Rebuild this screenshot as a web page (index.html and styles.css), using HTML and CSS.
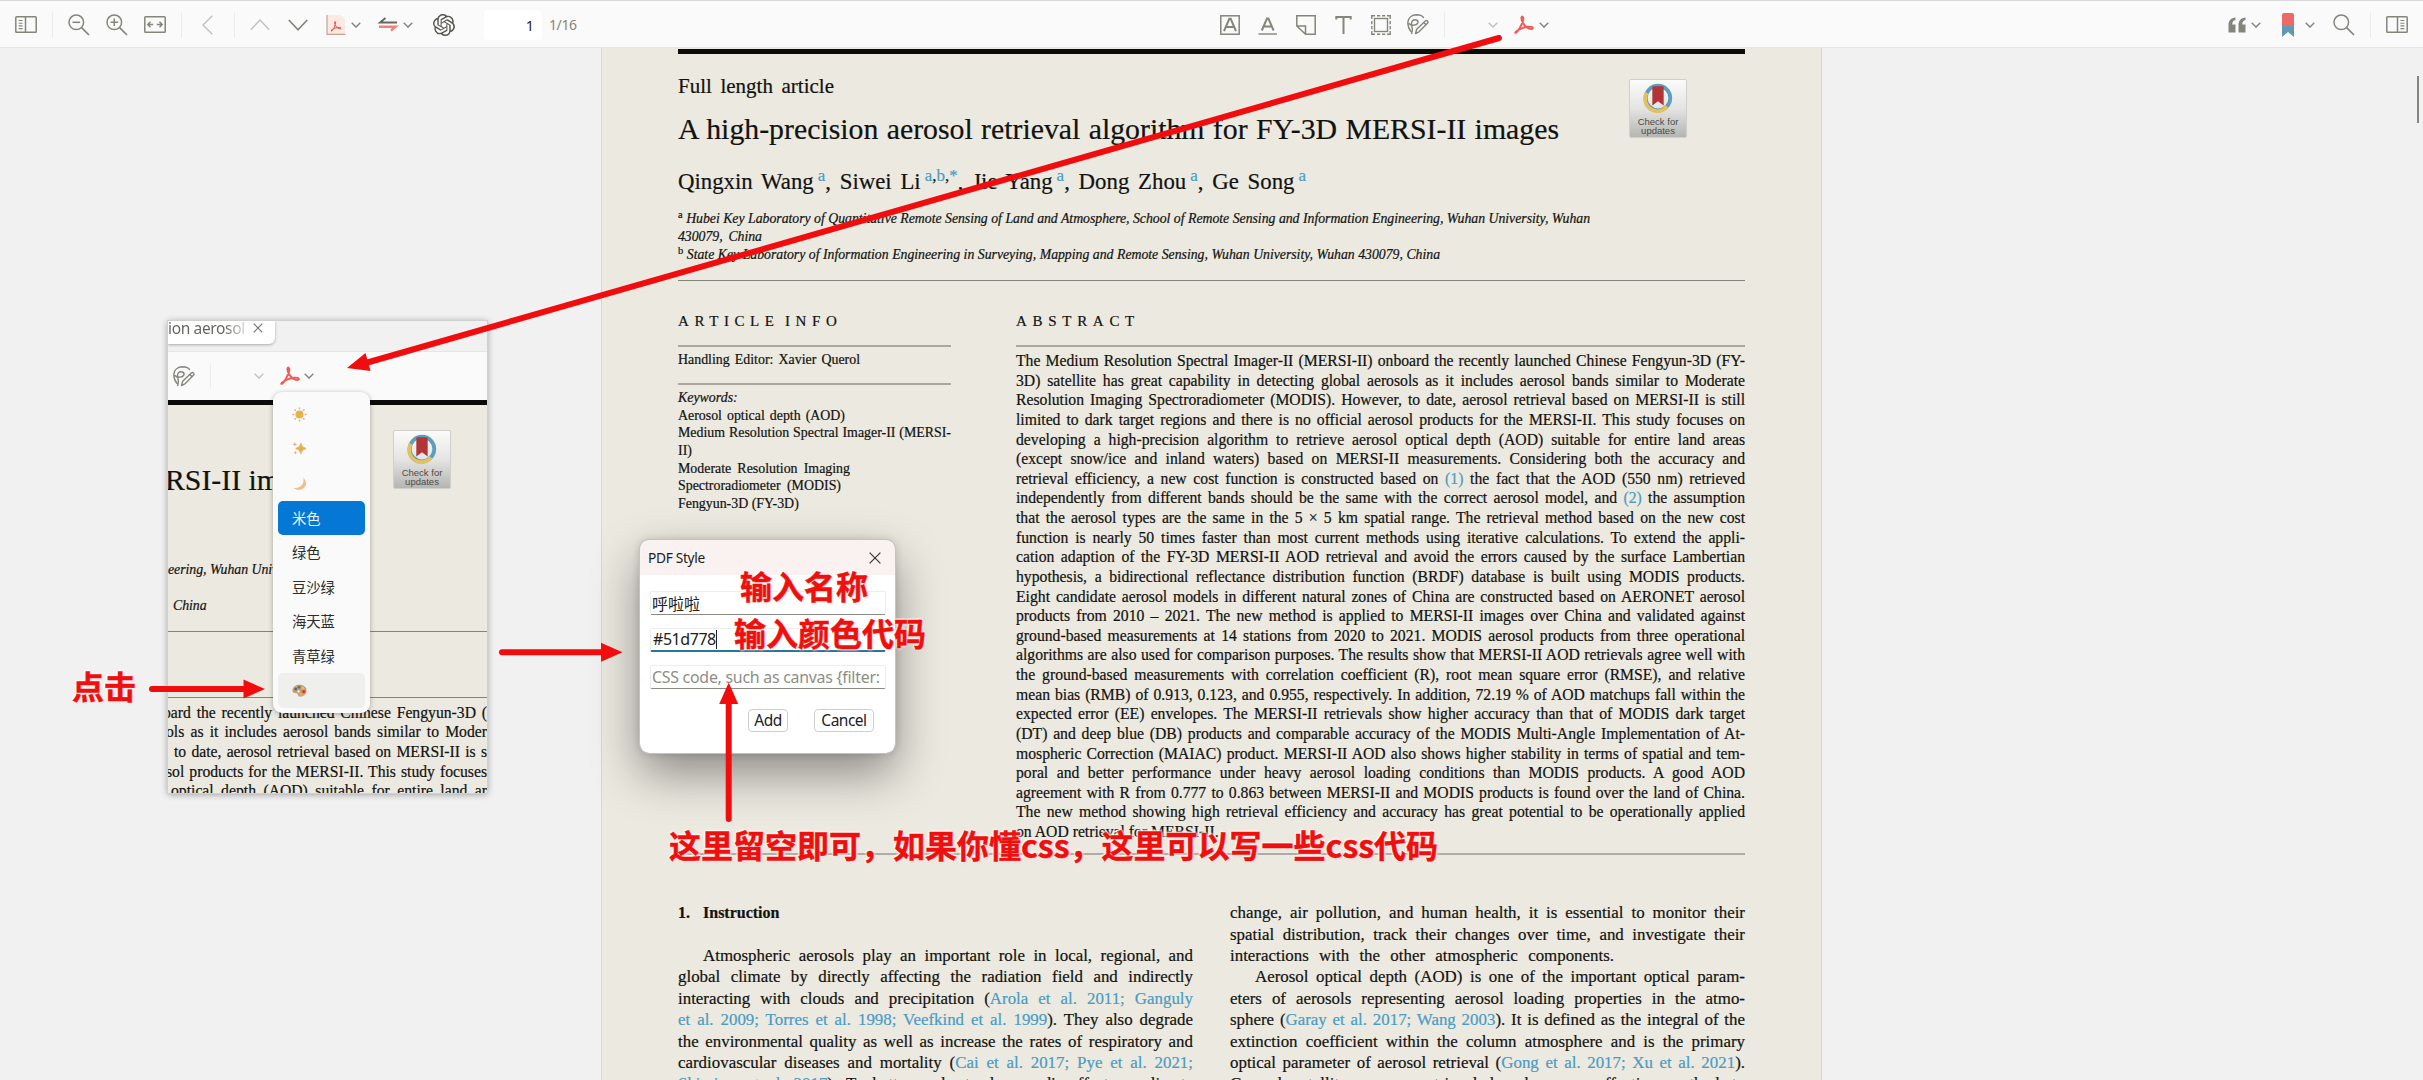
FILE: index.html
```html
<!DOCTYPE html>
<html lang="zh-CN">
<head>
<meta charset="utf-8">
<title>PDF Style</title>
<link rel="stylesheet" href="styles.css">
</head>
<body>
<svg class="defs" width="0" height="0">
  <symbol id="chev" viewBox="0 0 10 6"><path d="M.7.8 5 5.1 9.3.8" fill="none" stroke="currentColor" stroke-width="1.4"/></symbol>
  <symbol id="acrobat" viewBox="0 0 20 20"><path d="M1.6 18.3C4 16.500 8.200 9.500 9.200 5 9.900 1.300 7.600.6 7.400 3 7.200 6.500 11.200 12.300 15 13.700c2.500.9 4.400.1 3.700-1.200-1-1.500-7-.9-11 .8C4.300 14.800.2 17.300 1.600 18.300" fill="none" stroke="currentColor" stroke-width="1.9" stroke-linejoin="round"/></symbol>
  <symbol id="scribble" viewBox="0 0 22 21"><g fill="none" stroke="currentColor" stroke-width="1.4" stroke-linecap="round" stroke-linejoin="round"><path d="M4 17.500C1.500 14.500.7 11 .9 8 1.300 3.500 5 .9 9.500.8c3 0 5.500.8 7 2.700"/><path d="M2 9.500C4 12.300 10 11.500 11 8.500c.5-2.500-3.500-3.700-5.500-1.700S5 12.500 5.300 14.500c.2 2-.2 4-.6 5"/><path d="M8.500 19.500l1.200-4.200L18.300 7a1.500 1.500 0 0 1 2.200 0 1.500 1.500 0 0 1 0 2.200L12 17.800z M16.800 8.600l2.200 2.200"/></g></symbol>
  <symbol id="side" viewBox="0 0 22 17"><g fill="none" stroke="currentColor"><rect x=".8" y=".8" width="20.400" height="15.400" rx=".8" stroke-width="1.500"/><path d="M10.500 1v15" stroke-width="1.500"/><path d="M3.600 4.500h4M3.600 7.200h4M3.600 9.900h4M3.600 12.600h4" stroke-width="1.100"/></g></symbol>
  <symbol id="lens" viewBox="0 0 22 22"><circle cx="8.300" cy="8.300" r="7.300" fill="none" stroke="currentColor" stroke-width="1.500"/><path d="M13.600 13.600l7.400 7.400" stroke="currentColor" stroke-width="1.700"/></symbol>
  <symbol id="badge" viewBox="0 0 36 36"><g fill="none" stroke-width="4"><circle cx="18" cy="18" r="13" stroke="#5b9fbd"/><path d="M6 12.500A13 13 0 0 0 27.500 27" stroke="#e2c162"/></g><path d="M12 6.500q0-1 1-1h10q1 0 1 1V26l-6-4.500-6 4.500z" fill="#b13436"/></symbol>
</svg>

<header class="toolbar">
  <div class="group group-left">
    <svg class="w22 h17"><use href="#side"/></svg>
    <i class="sep s1"></i>
    <svg class="w22 h22 m-a"><use href="#lens"/><path d="M4.500 8.300h7.600" stroke="currentColor" stroke-width="1.500"/></svg>
    <svg class="w22 h22 m-b"><use href="#lens"/><path d="M4.500 8.300h7.600M8.300 4.500v7.600" stroke="currentColor" stroke-width="1.500"/></svg>
    <svg class="w22 h17 m-b" viewBox="0 0 22 17" fill="none" stroke="currentColor" stroke-width="1.500"><rect x=".8" y=".8" width="20.400" height="15.400" rx=".8"/><path d="M9.200 8.500H4.300M6.500 5.800 3.800 8.500l2.700 2.700M12.800 8.500h4.900M15.500 5.800l2.700 2.700-2.700 2.700"/></svg>
    <i class="sep s1"></i>
    <svg class="w11 h20 m-c light" viewBox="0 0 11 20" fill="none" stroke="currentColor" stroke-width="1.400"><path d="M10.300.8 1 10l9.300 9.200"/></svg>
    <i class="sep s2"></i>
    <svg class="w20 h12 m-a light" viewBox="0 0 20 12" fill="none" stroke="currentColor" stroke-width="1.400"><path d="M.8 10.700 10 1l9.200 9.700"/></svg>
    <svg class="w20 h12 m-d" viewBox="0 0 20 12" fill="none" stroke="currentColor" stroke-width="1.700"><path d="M.8 1 10 10.800 19.200 1"/></svg>
    <svg class="w20 h20 m-d" viewBox="0 0 20 20"><path d="M1 0h14l4 4v15H1z" fill="#fbe9e2"/><path d="M1 0v19.300h18.500" fill="none" stroke="#c9a296" stroke-width="1.200"/><g transform="translate(4.500 6) scale(.55)" color="#e0605a"><use href="#acrobat" width="20" height="20"/></g></svg>
    <svg class="chev m-e"><use href="#chev"/></svg>
    <svg class="w18 h16 m-g" viewBox="0 0 18 16" fill="none" stroke-width="1.900"><path d="M18 5.500H1L6.500 1" stroke="#66665f"/><path d="M0 9.700h16.500L12 13.500" stroke="#f4807a" stroke-width="2.400"/></svg>
    <svg class="chev m-l"><use href="#chev"/></svg>
    <svg class="w22 h22 m-t" viewBox="0 0 24 24"><path fill="#55554f" d="M22.2819 9.8211a5.9847 5.9847 0 0 0-.5157-4.9108 6.0462 6.0462 0 0 0-6.5098-2.9A6.0651 6.0651 0 0 0 4.9807 4.1818a5.9847 5.9847 0 0 0-3.9977 2.9 6.0462 6.0462 0 0 0 .7427 7.0966 5.98 5.98 0 0 0 .511 4.9107 6.051 6.051 0 0 0 6.5146 2.9001A5.9847 5.9847 0 0 0 13.2599 24a6.0557 6.0557 0 0 0 5.7718-4.2058 5.9894 5.9894 0 0 0 3.9977-2.9001 6.0557 6.0557 0 0 0-.7475-7.0729zm-9.022 12.6081a4.4755 4.4755 0 0 1-2.8764-1.0408l.1419-.0804 4.7783-2.7582a.7948.7948 0 0 0 .3927-.6813v-6.7369l2.02 1.1686a.071.071 0 0 1 .038.052v5.5826a4.504 4.504 0 0 1-4.4945 4.4944zm-9.6607-4.1254a4.4708 4.4708 0 0 1-.5346-3.0137l.142.0852 4.783 2.7582a.7712.7712 0 0 0 .7806 0l5.8428-3.3685v2.3324a.0804.0804 0 0 1-.0332.0615L9.74 19.9502a4.4992 4.4992 0 0 1-6.1408-1.6464zM2.3408 7.8956a4.485 4.485 0 0 1 2.3655-1.9728V11.6a.7664.7664 0 0 0 .3879.6765l5.8144 3.3543-2.0201 1.1685a.0757.0757 0 0 1-.071 0l-4.8303-2.7865A4.504 4.504 0 0 1 2.3408 7.872zm16.5963 3.8558L13.1038 8.364 15.1192 7.2a.0757.0757 0 0 1 .071 0l4.8303 2.7913a4.4944 4.4944 0 0 1-.6765 8.1042v-5.6772a.79.79 0 0 0-.407-.667zm2.0107-3.0231l-.142-.0852-4.7735-2.7818a.7759.7759 0 0 0-.7854 0L9.409 9.2297V6.8974a.0662.0662 0 0 1 .0284-.0615l4.8303-2.7866a4.4992 4.4992 0 0 1 6.6802 4.66zM8.3065 12.863l-2.02-1.1638a.0804.0804 0 0 1-.038-.0567V6.0742a4.4992 4.4992 0 0 1 7.3757-3.4537l-.142.0805L8.704 5.459a.7948.7948 0 0 0-.3927.6813zm1.0976-2.3654l2.602-1.4998 2.6069 1.4998v2.9994l-2.5974 1.4997-2.6067-1.4997Z"/></svg>
    <span class="page-input">1</span><span class="page-count">1/16</span>
  </div>
  <div class="group group-mid">
    <svg class="w20 h20" viewBox="0 0 20 20" fill="none" stroke="currentColor"><rect x=".8" y=".8" width="18.400" height="18.400" stroke-width="1.500"/><path d="M4 16.200 9.300 3.800h1.400L16 16.200M6 12h8" stroke-width="2"/></svg>
    <svg class="w20 h20 m-d" viewBox="0 0 20 20" fill="none" stroke="currentColor"><path d="M3.800 15.500 9 3.500h1.400l5.200 12M5.600 11.500h8.500" stroke-width="2"/><path d="M.5 19h18.500" stroke-width="1.400"/></svg>
    <svg class="w20 h20 m-d" viewBox="0 0 20 20" fill="none" stroke="currentColor" stroke-width="1.500"><path d="M.8.8h18.400v18.400H9.500L.8 11zM.8 11h8.700v8.200"/></svg>
    <svg class="w15 h18 m-t" viewBox="0 0 15 18" fill="none" stroke="currentColor" stroke-width="2"><path d="M.3 3.500V1h14.400v2.500M7.500 1v17"/></svg>
    <svg class="w20 h20 m-t" viewBox="0 0 20 20" fill="none" stroke="currentColor" stroke-width="1.400"><rect x="3.500" y="3.500" width="13" height="13"/><path d="M.8 4V.8H4M6 .8h3.200M11 .8h3.200M16 .8h3.200V4M19.200 6v3.200M19.200 11v3.200M19.200 16v3.200H16M14.200 19.200H11M9.200 19.200H6M4 19.200H.8V16M.8 14.200V11M.8 9.200V6"/></svg>
    <svg class="w22 h21 m-b"><use href="#scribble"/></svg>
    <i class="sep s1"></i>
    <svg class="chev light m-h"><use href="#chev"/></svg>
    <svg class="w20 h20 m-b red"><use href="#acrobat"/></svg>
    <svg class="chev m-e"><use href="#chev"/></svg>
  </div>
  <div class="group group-right">
    <svg class="w18 h16" viewBox="0 0 18 16" fill="currentColor"><path d="M7.500.5v2.600C5.500 3.500 4.300 4.800 4.200 7.500h3.300v8H.5V8C.5 3.500 3 .8 7.500.5zM17.500.5v2.600c-2 .4-3.200 1.700-3.300 4.400h3.300v8h-7V8c0-4.500 2.500-7.200 7-7.500z"/></svg>
    <svg class="chev m-e"><use href="#chev"/></svg>
    <svg class="w12 h24 m-i" viewBox="0 0 12 24"><path d="M0 2q0-2 2-2h8q2 0 2 2v11H0z" fill="#ee6866"/><path d="M0 13h12v11l-6-5-6 5z" fill="#6199b4"/></svg>
    <svg class="chev m-j"><use href="#chev"/></svg>
    <svg class="w22 h22 m-k"><use href="#lens"/></svg>
    <i class="sep s1"></i>
    <svg class="w22 h17 m-a" viewBox="0 0 22 17"><g transform="matrix(-1 0 0 1 22 0)"><use href="#side" width="22" height="17"/></g></svg>
  </div>
</header>

<main class="viewer">
  <article class="paper">
    <div class="top-rule"></div>
    <div class="kind">Full length article</div>
    <h1 class="title">A high-precision aerosol retrieval algorithm for FY-3D MERSI-II images</h1>
    <div class="authors">Qingxin Wang<sup>a</sup>, Siwei Li<sup>a<b>,</b>b<b>,</b>*</sup>, Jie Yang<sup>a</sup>, Dong Zhou<sup>a</sup>, Ge Song<sup>a</sup></div>
    <div class="affil">
      <div class="a1"><sup>a</sup> Hubei Key Laboratory of Quantitative Remote Sensing of Land and Atmosphere, School of Remote Sensing and Information Engineering, Wuhan University, Wuhan</div>
      <div class="a2">430079, China</div>
      <div class="a3"><sup>b</sup> State Key Laboratory of Information Engineering in Surveying, Mapping and Remote Sensing, Wuhan University, Wuhan 430079, China</div>
    </div>
    <div class="badge main-badge"><svg><use href="#badge"/></svg><span>Check for<br>updates</span></div>
    <div class="rule"></div>
    <div class="front">
      <section class="info">
        <h2 class="tight">ARTICLE INFO</h2>
        <div class="thin"></div>
        <p class="editor">Handling Editor: Xavier Querol</p>
        <div class="thin"></div>
        <div class="keywords">
          <p class="k0"><em>Keywords:</em></p>
          <p class="k1">Aerosol optical depth (AOD)</p>
          <p class="k2">Medium Resolution Spectral Imager-II (MERSI-</p>
          <p class="k3">II)</p>
          <p class="k4">Moderate Resolution Imaging</p>
          <p class="k5">Spectroradiometer (MODIS)</p>
          <p class="k6">Fengyun-3D (FY-3D)</p>
        </div>
      </section>
      <section class="abstract">
        <h2>ABSTRACT</h2>
        <div class="thin"></div>
        <div class="lines">
          <p>The Medium Resolution Spectral Imager-II (MERSI-II) onboard the recently launched Chinese Fengyun-3D (FY-</p>
          <p>3D) satellite has great capability in detecting global aerosols as it includes aerosol bands similar to Moderate</p>
          <p>Resolution Imaging Spectroradiometer (MODIS). However, to date, aerosol retrieval based on MERSI-II is still</p>
          <p>limited to dark target regions and there is no official aerosol products for the MERSI-II. This study focuses on</p>
          <p>developing a high-precision algorithm to retrieve aerosol optical depth (AOD) suitable for entire land areas</p>
          <p>(except snow/ice and inland waters) based on MERSI-II measurements. Considering both the accuracy and</p>
          <p>retrieval efficiency, a new cost function is constructed based on <a>(1)</a> the fact that the AOD (550 nm) retrieved</p>
          <p>independently from different bands should be the same with the correct aerosol model, and <a>(2)</a> the assumption</p>
          <p>that the aerosol types are the same in the 5 × 5 km spatial range. The retrieval method based on the new cost</p>
          <p>function is nearly 50 times faster than most current methods using iterative calculations. To extend the appli-</p>
          <p>cation adaption of the FY-3D MERSI-II AOD retrieval and avoid the errors caused by the surface Lambertian</p>
          <p>hypothesis, a bidirectional reflectance distribution function (BRDF) database is built using MODIS products.</p>
          <p>Eight candidate aerosol models in different natural zones of China are constructed based on AERONET aerosol</p>
          <p>products from 2010 – 2021. The new method is applied to MERSI-II images over China and validated against</p>
          <p>ground-based measurements at 14 stations from 2020 to 2021. MODIS aerosol products from three operational</p>
          <p>algorithms are also used for comparison purposes. The results show that MERSI-II AOD retrievals agree well with</p>
          <p>the ground-based measurements with correlation coefficient (R), root mean square error (RMSE), and relative</p>
          <p>mean bias (RMB) of 0.913, 0.123, and 0.955, respectively. In addition, 72.19 % of AOD matchups fall within the</p>
          <p>expected error (EE) envelopes. The MERSI-II retrievals show higher accuracy than that of MODIS dark target</p>
          <p>(DT) and deep blue (DB) products and comparable accuracy of the MODIS Multi-Angle Implementation of At-</p>
          <p>mospheric Correction (MAIAC) product. MERSI-II AOD also shows higher stability in terms of spatial and tem-</p>
          <p>poral and better performance under heavy aerosol loading conditions than MODIS products. A good AOD</p>
          <p>agreement with R from 0.777 to 0.863 between MERSI-II and MODIS products is found over the land of China.</p>
          <p>The new method showing high retrieval efficiency and accuracy has great potential to be operationally applied</p>
          <p class="last">on AOD retrieval for MERSI-II.</p>
        </div>
      </section>
    </div>
    <div class="rule thick"></div>
    <div class="body-text">
      <div class="col">
        <h3><span>1.</span>Instruction</h3>
        <p class="indent">Atmospheric aerosols play an important role in local, regional, and</p>
        <p>global climate by directly affecting the radiation field and indirectly</p>
        <p>interacting with clouds and precipitation (<a>Arola et al. 2011; Ganguly</a></p>
        <p><a>et al. 2009; Torres et al. 1998; Veefkind et al. 1999</a>). They also degrade</p>
        <p>the environmental quality as well as increase the rates of respiratory and</p>
        <p>cardiovascular diseases and mortality (<a>Cai et al. 2017; Pye et al. 2021;</a></p>
        <p><a>Shiraiwa et al. 2017</a>). To better understand aerosol's effect on climate</p>
      </div>
      <div class="col">
        <p>change, air pollution, and human health, it is essential to monitor their</p>
        <p>spatial distribution, track their changes over time, and investigate their</p>
        <p class="short">interactions with the other atmospheric components.</p>
        <p class="indent">Aerosol optical depth (AOD) is one of the important optical param-</p>
        <p>eters of aerosols representing aerosol loading properties in the atmo-</p>
        <p>sphere (<a>Garay et al. 2017; Wang 2003</a>). It is defined as the integral of the</p>
        <p>extinction coefficient within the column atmosphere and is the primary</p>
        <p>optical parameter of aerosol retrieval (<a>Gong et al. 2017; Xu et al. 2021</a>).</p>
        <p>Ground satellite sensors retrieval has been an effective method to</p>
      </div>
    </div>
  </article>
  <div class="scroll-thumb"></div>
</main>

<section class="inset">
  <div class="tabs"><div class="tab"><span>ion aerosol</span><svg viewBox="0 0 10 10"><path d="M.7.7l8.600 8.600M9.300.7.7 9.300" stroke="#77776f" stroke-width="1.200"/></svg></div></div>
  <div class="inset-bar">
    <svg class="w22 h21"><use href="#scribble"/></svg><i class="sep s1"></i>
    <svg class="chev light m-h"><use href="#chev"/></svg>
    <svg class="w20 h20 m-b red"><use href="#acrobat"/></svg>
    <svg class="chev m-n"><use href="#chev"/></svg>
  </div>
  <div class="inset-page">
    <div class="title">RSI-II images</div>
    <div class="badge inset-badge"><svg><use href="#badge"/></svg><span>Check for<br>updates</span></div>
    <div class="affil i1">eering, Wuhan University</div>
    <div class="affil i2">China</div>
    <div class="rule"></div>
    <div class="rule second"></div>
    <div class="lines">
      <p class="l1">oard the recently launched Chinese Fengyun-3D (</p>
      <p class="l2">ols as it includes aerosol bands similar to Moder</p>
      <p class="l3">to date, aerosol retrieval based on MERSI-II is s</p>
      <p class="l2">sol products for the MERSI-II. This study focuses</p>
      <p class="l5">optical depth (AOD) suitable for entire land ar</p>
    </div>
  </div>
</section>

<ul class="menu">
  <li><svg viewBox="0 0 16 16"><circle cx="8" cy="8" r="4.300" fill="#e3b44d"/><path d="M8 .5v2M8 13.500v2M.5 8h2M13.500 8h2M2.700 2.700l1.400 1.400M11.900 11.900l1.400 1.400M2.700 13.300l1.400-1.400M11.900 4.100l1.400-1.400" stroke="#eda574" stroke-width="1.500"/></svg></li>
  <li><svg viewBox="0 0 16 16"><path d="M9.500 2.500q.8 4.700 5.500 5.500-4.700.8-5.500 5.500Q8.700 8.800 4 8q4.700-.8 5.500-5.500z" fill="#e3b04f" stroke="#e3b04f"/><path d="M3 1l.7 1.800 1.800.7-1.800.7L3 6l-.7-1.800L.5 3.500l1.800-.7zM3.500 10.500l.6 1.400 1.400.6-1.400.6-.6 1.400-.6-1.400-1.400-.6 1.400-.6z" fill="#e8a877"/></svg></li>
  <li><svg viewBox="0 0 16 16"><path d="M12 1.500c3.500 3 4 8 1 11s-8 3.200-11.500 0c4 .8 7.500-.5 9.300-3.200 1.500-2.300 1.900-5 1.200-7.800z" fill="#f1bd8f"/></svg></li>
  <li class="selected">米色</li>
  <li>绿色</li>
  <li>豆沙绿</li>
  <li>海天蓝</li>
  <li>青草绿</li>
  <li class="hover"><svg viewBox="0 0 16 16"><path d="M8 1.800c4.500 0 7.500 2.600 7.500 6.200 0 3.800-3.500 6.500-7 6.500-2.700 0-1.500-2.500-3-3.300S.5 11.500.5 8 3.500 1.800 8 1.800z" fill="#c89a78"/><circle cx="4" cy="6.500" r="1.500" fill="#4d6b73"/><circle cx="7.500" cy="4.500" r="1.500" fill="#5a7d52"/><circle cx="11.500" cy="5.500" r="1.500" fill="#e8c24f"/><circle cx="12.500" cy="9" r="1.600" fill="#e02e2a"/><circle cx="9.500" cy="12" r="1.500" fill="#e8b33f"/><circle cx="7" cy="9" r="1.200" fill="#fff"/></svg></li>
</ul>

<section class="dialog">
  <header><span>PDF Style</span><svg viewBox="0 0 12 12"><path d="M.6.6l10.800 10.800M11.400.6.6 11.400" stroke="#3d3d3a" stroke-width="1.300"/></svg></header>
  <div class="field cjk">呼啦啦</div>
  <div class="field active">#51d778<i></i></div>
  <div class="field hint">CSS code, such as canvas {filter:</div>
  <footer><span class="btn add">Add</span><span class="btn cancel">Cancel</span></footer>
</section>

<svg class="arrows" viewBox="0 0 2423 1080">
  <g stroke="#f10d0d" stroke-width="6" stroke-linecap="round">
    <path d="M1499 38 364 363.500"/><path d="M152 689h95"/><path d="M502 652.300h102"/><path d="M728.700 819V700"/>
  </g>
  <g fill="#f10d0d">
    <path d="M347 368 365.500 353l5 18z"/><path d="M265 689l-21.500-9.500v19z"/><path d="M622.500 652.300l-21.500-9.500v19z"/><path d="M728.700 682.500l-9.500 21.500h19z"/>
  </g>
</svg>
<div class="note n1">点击</div>
<div class="note n2">输入名称</div>
<div class="note n3">输入颜色代码</div>
<div class="note n4">这里留空即可，如果你懂css，这里可以写一些css代码</div>
</body>
</html>
```
FILE: styles.css
```css
* { box-sizing: border-box; }
body { margin: 0; width: 2423px; height: 1080px; overflow: hidden; position: relative; display: flex; flex-direction: column; background: #f1f1f1; color: #12120f; font-family: "Liberation Serif", serif; }
p, h1, h2, h3, ul { margin: 0; padding: 0; font-weight: normal; }
.defs { position: absolute; }
svg { display: block; flex: none; overflow: visible; }

/* toolbar */
.toolbar { height: 48px; flex: none; display: flex; background: #fafafa; border-top: 1px solid #d9d9d9; border-bottom: 1px solid #e4e4e4; color: #85857c; font-family: "Noto Sans", sans-serif; position: relative; z-index: 1; }
.group { display: flex; align-items: center; height: 47px; }
.group-left { width: 1220px; padding-left: 15px; }
.group-right { margin-left: auto; padding-right: 15px; }
.w11 { width: 11px; } .w12 { width: 12px; } .w15 { width: 15px; } .w18 { width: 18px; } .w20 { width: 20px; } .w22 { width: 22px; }
.h12 { height: 12px; } .h16 { height: 16px; } .h17 { height: 17px; } .h18 { height: 18px; } .h20 { height: 20px; } .h21 { height: 21px; } .h22 { height: 22px; } .h24 { height: 24px; }
.m-a { margin-left: 15px; } .m-b { margin-left: 16px; } .m-c { margin-left: 20px; } .m-d { margin-left: 18px; }
.m-e { margin-left: 5px; } .m-g { margin-left: 18px; } .m-h { margin-left: 43px; }
.m-i { margin-left: 21px; } .m-j { margin-left: 11px; } .m-k { margin-left: 18px; } .m-t { margin-left: 20px; }
.m-l { margin-left: 6px; } .m-n { margin-left: 4px; }
.sep { width: 1px; height: 26px; background: #ececec; flex: none; }
.s1 { margin-left: 15px; } .s2 { margin-left: 21px; }
.chev { width: 10px; height: 6px; }
.light { color: #c2c2bd; }
.red { color: #f05a57; }
.page-input { width: 58px; height: 30px; margin-left: 29px; padding-right: 8px; border-radius: 4px; background: #fff; color: #22221f; font-size: 14.5px; line-height: 30px; text-align: right; }
.page-count { margin-left: 7px; font-size: 14px; letter-spacing: -.4px; }

/* page */
.viewer { flex: 1; display: flex; justify-content: center; position: relative; overflow: hidden; }
.scroll-thumb { position: absolute; right: 4px; top: 28px; width: 2px; height: 47px; background: #868680; }
.paper { width: 1221px; height: 1032px; padding: 1px 76px 0; background: #ece9e0; border-left: 1px solid #d6d6d2; border-right: 1px solid #d6d6d2; position: relative; overflow: hidden; }
.paper, .inset-page { -webkit-text-stroke: .2px; }
.paper > *, .col > *, .lines > *, .info p, .affil > div { text-align-last: justify; white-space: nowrap; }
.paper a, sup { color: #4a9cc4; }
.top-rule { height: 5px; background: #0b0b09; }
.kind { width: 156px; margin-top: 20px; font-size: 21px; line-height: 24px; }
.title { width: 881px; margin-top: 14px; font-size: 29.800px; line-height: 34px; }
.authors { width: 628px; margin-top: 20.500px; font-size: 22.800px; line-height: 30px; }
sup { font-size: 17px; line-height: 0; vertical-align: 8px; margin-left: 4px; }
sup b { color: #12120f; font-weight: normal; }
.affil { margin-top: 13px; font-size: 13.800px; line-height: 18px; font-style: italic; letter-spacing: -.03px; }
.affil sup { margin: 0; color: #12120f; font-size: 10.500px; font-style: normal; vertical-align: 5px; }
.a1 { width: 912px; } .a2 { width: 84px; } .a3 { width: 762px; }
.rule { height: 1px; margin-top: 16px; background: #85837d; }
.front { display: flex; justify-content: space-between; }
.info { width: 273px; font-size: 13.900px; }
.abstract { width: 729px; }
h2 { margin-top: 30px; font-size: 15px; line-height: 20px; letter-spacing: 5.700px; text-align-last: left; }
.tight { letter-spacing: 5.600px; word-spacing: -4px; }
.thin { height: 1.500px; margin-top: 14.500px; background: #aaa8a0; }
.editor { width: 182px; margin-top: 4.500px; line-height: 18px; }
.editor + .thin { margin-top: 14px; }
.keywords { margin-top: 4.500px; line-height: 17.650px; }
.k0 { width: 57px; } .k1 { width: 167px; } .k2 { width: 273px; } .k3 { width: 14px; } .k4 { width: 172px; } .k5 { width: 163px; } .k6 { width: 120px; }
.lines { margin-top: 4.500px; font-size: 15.700px; line-height: 19.620px; }
.lines .last { width: 202px; }
.thick { height: 2px; margin-top: 11px; background: #aeaca5; }
.body-text { display: flex; justify-content: space-between; margin-top: 47.500px; font-size: 16.900px; line-height: 21.400px; }
.col { width: 515px; }
h3 { margin-bottom: 21.400px; font-size: 16px; line-height: 21.400px; font-weight: bold; }
.col h3 { text-align-last: left; }
h3 span { display: inline-block; width: 25px; }
.indent { padding-left: 25px; }
.short { width: 384px; }
.badge { position: absolute; width: 58px; height: 59px; padding-top: 2px; border: 1px solid #cfcfcb; border-radius: 2px; background: linear-gradient(#fbfbfa, #e4e4e2 50%, #b5b5b2); color: #4c4c49; font: 9.500px/9px "Liberation Sans", sans-serif; -webkit-text-stroke: 0; }
.badge svg { width: 34px; height: 34px; margin: -1px auto 0; }
.badge span { display: block; text-align: center; text-align-last: center; margin-top: 2px; white-space: nowrap; }
.main-badge { left: 1027px; top: 31px; }

/* cropped view of the reader with its theme menu open */
.inset { position: absolute; z-index: 2; left: 168px; top: 321px; width: 319px; height: 472px; overflow: hidden; background: #ece9e0; outline: 1px solid #cfd0d0; box-shadow: 0 1px 7px rgba(0,0,0,.4); color: #12120f; }
.tabs { height: 31px; background: #f1f1f1; border-bottom: 1px solid #e6e6e6; }
.tab { width: 107px; height: 23px; display: flex; background: #fff; border-radius: 0 0 6px; box-shadow: 0 1px 3px rgba(0,0,0,.3); font: 15.500px/14px "Noto Sans", sans-serif; color: #63635d; }
.tab span { width: 80px; letter-spacing: -.35px; background: linear-gradient(90deg, #63635d 70%, #e8e8e8); background-clip: text; color: transparent; height: 20px; }
.tab svg { width: 10px; height: 10px; margin: 2px 0 0 5px; }
.inset-bar { height: 48px; display: flex; align-items: center; padding-left: 5px; background: #fafafa; color: #85857c; }
.inset-page { height: 393px; border-top: 5px solid #0b0b09; display: flex; flex-direction: column; position: relative; white-space: nowrap; }
.inset-page .title { width: auto; margin: 58px 0 0 -3px; }
.inset-badge { left: 225px; top: 25px; }
.inset-page .affil { margin: 0; }
.inset-page .i1 { margin-top: 64px; }
.inset-page .i2 { margin: 18px 0 0 5px; }
.inset-page .second { margin-top: 65px; }
.inset-page .rule { flex: none; }
.inset-page .lines { margin-top: 4.500px; line-height: 19.700px; }
.l1 { margin-left: -5px; } .l2 { margin-left: -2px; } .l3 { margin-left: 6px; } .l5 { margin-left: 3px; }

.menu { position: absolute; z-index: 3; left: 273px; top: 392px; width: 97px; height: 321px; padding: 5px; list-style: none; border-radius: 9px; background: #fafafa; box-shadow: 0 1px 5px rgba(0,0,0,.3); font: 14.300px/34.500px "Noto Sans CJK SC", sans-serif; color: #2c2c29; }
.menu li { height: 34.500px; padding-left: 14px; display: flex; align-items: center; border-radius: 5px; }
.menu svg { width: 15px; height: 15px; }
.menu .selected { background: #0578d6; color: #e6f2f6; }
.menu .hover { background: #efefee; }

/* style dialog */
.dialog { position: absolute; z-index: 3; left: 640px; top: 540px; width: 255px; height: 213px; border-radius: 9px; background: #fff; outline: 1px solid #c5c3bd; box-shadow: 0 0 8px rgba(0,0,0,.18), 0 20px 48px rgba(0,0,0,.42); font-family: "Noto Sans", "Noto Sans CJK SC", sans-serif; color: #20201e; }
.dialog header { height: 35px; padding: 0 14px 0 8px; display: flex; align-items: center; justify-content: space-between; border-radius: 9px 9px 0 0; background: #f9f2f1; font-size: 13.700px; letter-spacing: -.3px; }
.dialog header svg { width: 12px; height: 12px; }
.field { position: relative; width: 236px; height: 24px; margin: 13px 0 0 10px; padding: 0 0 1px 2px; display: flex; align-items: center; border: 1px solid #ededeb; border-bottom: 1px solid #8b8b86; border-radius: 2px; font-size: 16px; letter-spacing: -.45px; white-space: nowrap; }
.cjk { margin-top: 16px; padding-left: 1px; font-family: "Noto Sans CJK SC", sans-serif; letter-spacing: 0; }
.active { border-bottom: 2px solid #24779e; }
.active i { width: 1px; height: 19px; background: #222; }
.hint { color: #8e8e86; font-size: 15.900px; letter-spacing: -.25px; padding-left: 1px; }
.dialog footer { display: flex; justify-content: flex-end; gap: 26px; margin: 20px 21px 0 0; }
.btn { height: 23px; border: 1px solid #cfcfca; border-radius: 4px; font-size: 15.500px; line-height: 21px; letter-spacing: -.5px; text-align: center; }
.add { width: 40px; } .cancel { width: 60px; }

/* annotations */
.arrows { position: absolute; z-index: 4; inset: 0; width: 2423px; height: 1080px; }
.note { position: absolute; z-index: 5; color: #ee0f0f; font: bold 32px/40px "Noto Sans CJK SC", sans-serif; white-space: nowrap; -webkit-text-stroke: .5px #ee0f0f; text-shadow: 0 0 2px #fff, 0 0 3px #fff, 1px 1px 3px #f3cfc8, -1px -1px 2px #fff; }
.n1 { left: 72px; top: 665px; }
.n2 { left: 740px; top: 565px; }
.n3 { left: 734px; top: 612px; }
.n4 { left: 669px; top: 824px; }
```
